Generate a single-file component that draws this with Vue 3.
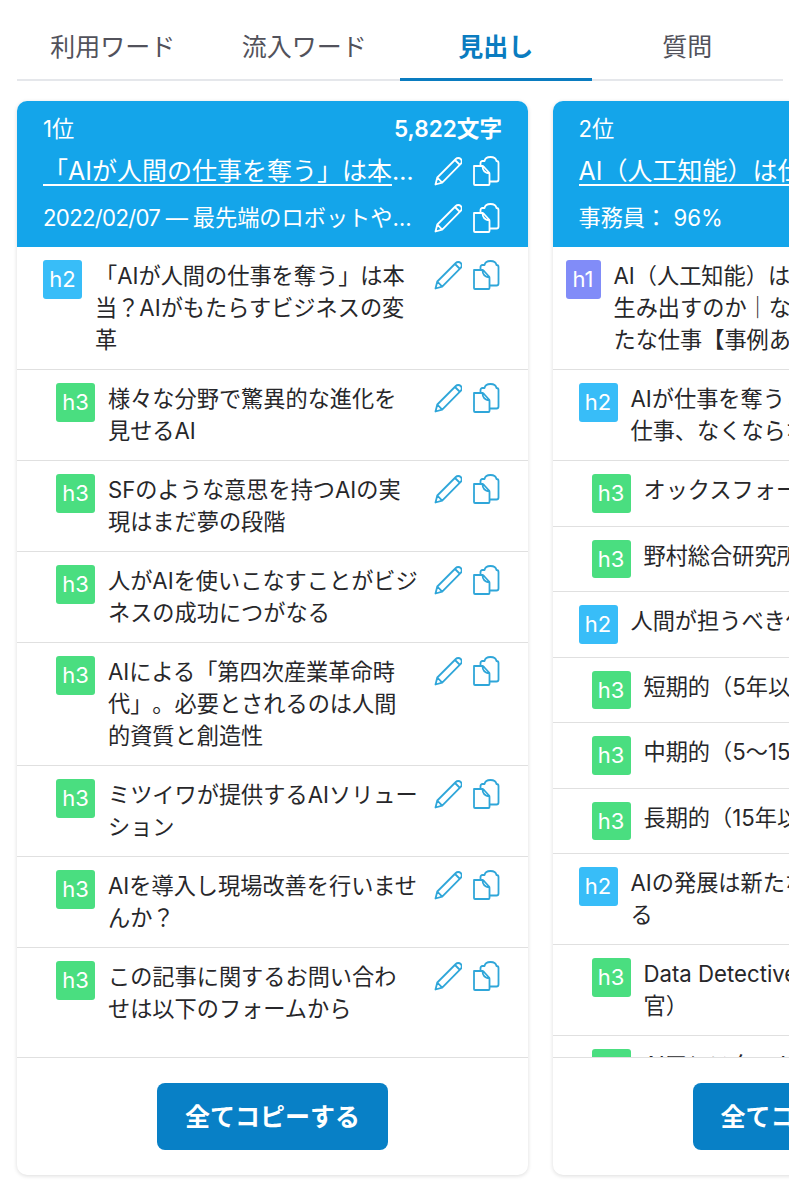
<template>
  <div class="page">
    <nav class="tabs">
      <button v-for="tab in tabs" :key="tab" class="tab" :class="{ active: tab === '見出し' }">{{ tab }}</button>
    </nav>
    <div class="scroller">
      <section v-for="card in cards" :key="card.rank" class="card">
        <header class="head">
          <div class="head-top">
            <span>{{ card.rank }}位</span>
            <strong>{{ card.chars }}文字</strong>
          </div>
          <div class="head-row">
            <p class="head-text title"><a href="#">{{ card.title }}</a></p>
            <div class="actions">
              <svg class="icon" viewBox="0 0 28 30"><path :d="pencil" /></svg>
              <svg class="icon" viewBox="0 0 28 30"><path :d="copy" /></svg>
            </div>
          </div>
          <div class="head-row">
            <p class="head-text"><span class="date">{{ card.date }}</span>{{ card.desc }}</p>
            <div class="actions">
              <svg class="icon" viewBox="0 0 28 30"><path :d="pencil" /></svg>
              <svg class="icon" viewBox="0 0 28 30"><path :d="copy" /></svg>
            </div>
          </div>
        </header>
        <ul class="list">
          <li v-for="(item, i) in card.items" :key="i" class="row" :class="item.tag">
            <span class="badge">{{ item.tag }}</span>
            <p class="text">{{ item.text }}</p>
            <div class="actions">
              <svg class="icon" viewBox="0 0 28 30"><path :d="pencil" /></svg>
              <svg class="icon" viewBox="0 0 28 30"><path :d="copy" /></svg>
            </div>
          </li>
        </ul>
        <footer class="foot">
          <button class="copy-all">全てコピーする</button>
        </footer>
      </section>
    </div>
  </div>
</template>

<script setup>
const tabs = ['利用ワード', '流入ワード', '見出し', '質問']

const pencil = 'M1.5 28.5 3.3 21.5 21.8 3a3.4 3.4 0 0 1 4.9 4.9L8.2 26.6ZM3.3 21.5l4.9 5.1M21 4l4.500 4.500'
const copy = 'M2 10h8c1 0 1.500.5 2 1l5 5.500c.5.500.5 1 .5 2V28a1 1 0 0 1-1 1H3a1 1 0 0 1-1-1ZM10.500 10c0 4 2.500 7 7 7.500M8.500 10V7c0-1 .8-2 2-2h2C13 2.500 15 1 18.500 1s5.500 1.500 6 4c1.500 0 2 1 2 2v16.500c0 1-1 2-2 2h-7'

const cards = [
  {
    rank: 1,
    chars: '5,822',
    title: '「AIが人間の仕事を奪う」は本当？AIがもたらすビジネスの変革',
    date: '2022/02/07 — ',
    desc: '最先端のロボットや人工知能の進化が注目されています',
    items: [
      { tag: 'h2', text: '「AIが人間の仕事を奪う」は本当？AIがもたらすビジネスの変革' },
      { tag: 'h3', text: '様々な分野で驚異的な進化を\n見せるAI' },
      { tag: 'h3', text: 'SFのような意思を持つAIの実現はまだ夢の段階' },
      { tag: 'h3', text: '人がAIを使いこなすことがビジネスの成功につがなる' },
      { tag: 'h3', text: 'AIによる「第四次産業革命時代」。必要とされるのは人間\n的資質と創造性' },
      { tag: 'h3', text: 'ミツイワが提供するAIソリューション' },
      { tag: 'h3', text: 'AIを導入し現場改善を行いませんか？' },
      { tag: 'h3', text: 'この記事に関するお問い合わ\nせは以下のフォームから' }
    ]
  },
  {
    rank: 2,
    chars: '4,310',
    title: 'AI（人工知能）は仕事を奪う？生み出すのか',
    date: '',
    desc: '事務員： 96%',
    items: [
      { tag: 'h1', text: 'AI（人工知能）は仕事を奪う？\n生み出すのか｜なくなる職と新\nたな仕事【事例あり】' },
      { tag: 'h2', text: 'AIが仕事を奪うと言われている仕事、なくならない仕事' },
      { tag: 'h3', text: 'オックスフォード大学の研究' },
      { tag: 'h3', text: '野村総合研究所の予測' },
      { tag: 'h2', text: '人間が担うべき仕事' },
      { tag: 'h3', text: '短期的（5年以内）' },
      { tag: 'h3', text: '中期的（5〜15年）' },
      { tag: 'h3', text: '長期的（15年以上）' },
      { tag: 'h2', text: 'AIの発展は新たな仕事を創出する' },
      { tag: 'h3', text: 'Data Detective（データ捜査官）' },
      { tag: 'h3', text: 'AIアシスタント' }
    ]
  }
]
</script>

<style>
html,
body {
  background: #fff;
}
</style>

<style scoped>
.page {
  width: 802px;
  height: 1200px;
  overflow: hidden;
  font-family: Inter, "Noto Sans CJK JP", sans-serif;
  color: #27272a;
  text-spacing-trim: space-all;
}

.tabs {
  display: flex;
  width: 766px;
  height: 81px;
  margin-left: 17px;
  border-bottom: 2px solid #e5e7eb;
  box-sizing: border-box;
}

.tab {
  flex: 1;
  height: 81px;
  padding: 11px 0 0;
  border: 0;
  border-bottom: 3px solid transparent;
  background: none;
  font: inherit;
  font-size: 25px;
  color: #52525b;
}

.tab.active {
  border-bottom-color: #0a7cc0;
  color: #0a7cc0;
  font-weight: 700;
}

.scroller {
  display: flex;
  gap: 24.5px;
  width: 789px;
  padding: 20px 0 24px 17px;
  box-sizing: border-box;
  overflow: hidden;
}

.card {
  display: flex;
  flex-direction: column;
  flex: 0 0 511px;
  height: 1074px;
  border-radius: 10px;
  background: #fff;
  box-shadow: 0 1px 4px rgba(0, 0, 0, 0.14);
  overflow: hidden;
}

.head {
  height: 146px;
  padding: 12px 26px 0;
  box-sizing: border-box;
  background: #14a5ea;
  color: #fff;
  font-size: 22.2px;
}

.head-top {
  display: flex;
  justify-content: space-between;
  height: 34px;
  line-height: 32px;
}

.head-top strong {
  font-size: 22.6px;
  font-weight: 600;
}

.head-row {
  display: flex;
  align-items: center;
  gap: 16px;
  height: 47px;
  margin-right: 2px;
}

.head-text {
  flex: 1;
  min-width: 0;
  margin: 0;
  overflow: hidden;
  white-space: nowrap;
  text-overflow: ellipsis;
  line-height: 34px;
}

.title {
  font-size: 25px;
}

.head-text a {
  color: inherit;
  text-decoration: underline;
  text-underline-offset: 4px;
}

.date {
  letter-spacing: -0.7px;
}

.actions {
  display: flex;
  flex: none;
  gap: 10px;
  color: #2fa6d9;
}

.head .actions {
  color: #fff;
}

.icon {
  width: 28px;
  height: 30px;
  fill: none;
  stroke: currentColor;
  stroke-width: 1.8;
  stroke-linejoin: round;
  stroke-linecap: round;
}

.list {
  flex: 1;
  min-height: 0;
  margin: 0;
  padding: 0;
  list-style: none;
  overflow: hidden;
}

.row {
  display: flex;
  align-items: flex-start;
  gap: 13px;
  padding: 13px 28px 13px 26px;
  border-bottom: 1px solid #e0e0e0;
}

.row:last-child {
  border-bottom: 0;
}

.row.h1 {
  padding-left: 13px;
}

.row.h3 {
  padding-left: 39px;
}

.row .actions {
  margin-left: 1px;
}

.badge {
  flex: none;
  width: 39px;
  height: 38.5px;
  border-radius: 3px;
  color: #fff;
  font-size: 22px;
  line-height: 38px;
  text-align: center;
}

.h1 .badge {
  width: 35px;
  background: #818cf8;
}

.h2 .badge {
  background: #38bdf8;
}

.h3 .badge {
  background: #4ade80;
}

.text {
  flex: 1;
  min-width: 0;
  margin: 0;
  font-size: 22.2px;
  line-height: 32px;
  white-space: pre-line;
}

.foot {
  display: flex;
  justify-content: center;
  height: 118px;
  padding-top: 25px;
  box-sizing: border-box;
  border-top: 1px solid #e0e0e0;
}

.copy-all {
  width: 231px;
  height: 67px;
  padding: 0 0 4px;
  border: 0;
  border-radius: 8px;
  background: #0880c6;
  color: #fff;
  font: inherit;
  font-size: 25px;
  font-weight: 700;
}
</style>
